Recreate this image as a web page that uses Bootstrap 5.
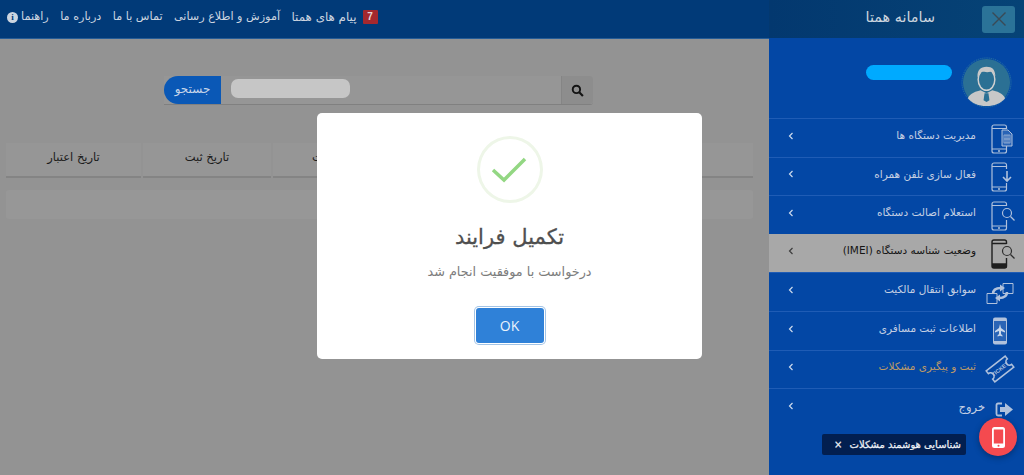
<!DOCTYPE html>
<html lang="fa">
<head>
<meta charset="utf-8">
<title>سامانه همتا</title>
<link href="https://cdn.jsdelivr.net/npm/bootstrap@5.3.0/dist/css/bootstrap.min.css" rel="stylesheet">
<style>
html,body{height:475px;overflow:hidden}
body{font-family:"DejaVu Sans","Noto Sans",sans-serif;background:#f5f5f5;position:relative;font-size:10px}
.shell{height:475px}
.workarea{width:769px;min-width:769px}
.topstrip{height:39px;background:#013a78;border-bottom:1px solid #265c96;color:#ccd5e0;padding:0 7px 3px;gap:11.5px;font-size:11.2px}
.infodot{width:11px;height:11px;border-radius:50%;background:#ccd5e0;color:#013a78;font:bold 9px/11px "Liberation Serif",serif;text-align:center;margin-right:3px}
.msgtext{font-size:11.9px;margin-right:2px}
.msgcount{background:#a5282e;color:#e8d5d6;font:bold 10px/14px "Liberation Sans",sans-serif;width:15px;height:14px;text-align:center;border-radius:1px}
.searchline{width:429px;height:29px;margin:37px 0 0 164px;background:#fbfbfb;border-bottom:1px solid #d6d6d6;border-radius:0 3px 3px 0}
.searchbtn{width:57px;background:#0a58b6;color:#c8d6ea;border-radius:15px 0 0 15px;font-size:12px;position:relative;z-index:1;padding-bottom:2px}
.searchfield{padding:3px 10px}
.blurpill{width:119px;height:19px;border-radius:7px;background:#c6c6c6;position:relative;z-index:1}
.lensbox{width:32px;background:#ececec;border-left:1px solid #dedede;border-radius:0 3px 3px 0}
.headrow{margin:38px 0 0 6px;width:747px;gap:2px;height:35px}
.headcell{background:#fbfbfb;border-bottom:2px solid #dcdcdc;color:#333;font-size:11.5px;padding-bottom:3px}
.cellvalid{width:135px}
.cellreg{width:128px}
.cellstate{width:135px}
.emptyrow{margin:12px 0 0 6px;width:747px;height:29px;background:#fcfcfc;border-radius:3px}
.dimmer{position:absolute;left:0;top:39px;width:769px;height:436px;background:rgba(0,0,0,.4)}
.dialog{position:absolute;left:317px;top:113px;width:385px;height:246px;background:#fff;border-radius:5px;z-index:3}
.okmark{width:66px;height:67px;border:3px solid #eef6e8;border-radius:50%;margin-top:23px}
.dialogtitle{font-size:21px;font-weight:500;color:#4f4f4f;line-height:28px;margin:20px 0 0;-webkit-text-stroke:.3px #4f4f4f}
.dialogtext{font-size:12.8px;color:#7c7c7c;margin:13px 0 0;line-height:16px}
.okbtn{width:68px;height:35px;margin-top:28px;background:#2f81d8;color:#eaf3fc;border:0;border-radius:3px;font:14px "Open Sans",sans-serif;box-shadow:0 0 0 1px #fff,0 0 0 2px #a3c4e6}
.sidepane{width:255px;background:#0347a5}
.sidetop{height:38px;background:linear-gradient(90deg,#03386f,#064376)}
.closebox{width:33px;height:27px;background:#2b7398;border-radius:3px;margin:0 9px 0 0}
.sidetitle{font-size:14.4px;color:#ced6df;margin-right:47px;padding-bottom:2px}
.userblock{height:80px;padding:0 12px 0 0}
.userpill{width:86px;height:15px;border-radius:8px;background:#00aaff;margin:0 9px 11px auto}
.avatar{margin-top:8px}
.menuline{height:38.6px;border-top:1px solid #1f5cb5;color:#c3cfe3;font-size:10.5px;padding-left:19px}
.menuline.current{background:#a8a8a8;color:#151515;border-top:0}
.menuline.amber{color:#bd9a68}
.chev{width:6px;height:8px;margin-bottom:4px;opacity:.8}
.menutext{margin:0 12px 4px auto}
.menutext.exittext{margin:0 3px 1px auto;font-size:11.5px}
.menuicon{width:36px;height:36px;overflow:visible;opacity:.9}
.tipbar{position:absolute;left:822px;top:434px;width:144px;height:21px;background:#021f50;color:#eef1f6;border-radius:2px;z-index:4;font-size:10px;-webkit-text-stroke:.25px #eef1f6;padding:0 5px 1px 12px;white-space:nowrap}
.redfab{position:absolute;left:979px;top:418px;width:38px;height:38px;border-radius:50%;background:#f44a4f;z-index:4;box-shadow:0 2px 6px rgba(0,0,0,.3)}
</style>
</head>
<body>
<div class="shell d-flex">
  <main class="workarea">
    <div class="topstrip d-flex align-items-center" dir="ltr">
      <span class="d-flex align-items-center"><span class="infodot">i</span><span dir="rtl">راهنما</span></span>
      <span dir="rtl">درباره ما</span>
      <span dir="rtl">تماس با ما</span>
      <span dir="rtl">آموزش و اطلاع رسانی</span>
      <span class="d-flex align-items-center gap-1"><span class="msgtext" dir="rtl">پیام های همتا</span><span class="msgcount">7</span></span>
    </div>
    <div class="searchline d-flex">
      <div class="searchbtn d-flex align-items-center justify-content-center">جستجو</div>
      <div class="searchfield flex-grow-1"><div class="blurpill"></div></div>
      <div class="lensbox d-flex align-items-center justify-content-center">
        <svg width="13" height="13" viewBox="0 0 12 12"><circle cx="5" cy="5" r="3.4" fill="none" stroke="#222" stroke-width="1.8"/><path d="M7.600 7.600 11 11" stroke="#222" stroke-width="2"/></svg>
      </div>
    </div>
    <div class="headrow d-flex">
      <div class="headcell cellvalid d-flex align-items-center justify-content-center">تاریخ اعتبار</div>
      <div class="headcell cellreg d-flex align-items-center justify-content-center">تاریخ ثبت</div>
      <div class="headcell cellstate d-flex align-items-center justify-content-center">وضعیت ثبت</div>
      <div class="headcell flex-grow-1"></div>
    </div>
    <div class="emptyrow"></div>
  </main>
  <aside class="sidepane flex-grow-1">
    <div class="sidetop d-flex align-items-center justify-content-end">
      <span class="sidetitle">سامانه همتا</span>
      <span class="closebox d-flex align-items-center justify-content-center">
        <svg width="16" height="16" viewBox="0 0 16 16"><path d="M1.500 1.500 14.500 14.500M14.500 1.500 1.500 14.500" stroke="#3a4a55" stroke-width="1.400"/></svg>
      </span>
    </div>
    <div class="userblock d-flex align-items-center">
      <div class="userpill"></div>
      <svg class="avatar" width="51" height="51" viewBox="0 0 52 52"><circle cx="26" cy="26" r="24" fill="#2b7094"/><circle cx="26" cy="26" r="25" fill="none" stroke="#2f7aa0" stroke-dasharray="1 1"/><path d="M7 42c2-5 9-7 13-8l6 3 6-3c4 1 11 3 13 8-4 5-11 8-19 8S11 47 7 42Z" fill="#c8c8c8"/><path d="M24 37h4l1 7-3 2-3-2Z" fill="#2b7094"/><ellipse cx="26" cy="23" rx="8.500" ry="11" fill="#2b7094" stroke="#d0d0d0" stroke-width="1.500"/><path d="M17 21c-1-7 3-11 9-11 6 0 9 3 9 10-1-3-3-5-5-5-3 1-7 0-9 0-1 2-3 3-4 6Z" fill="#c8c8c8"/></svg>
    </div>
    <div class="menuline d-flex align-items-center"><svg class="chev" viewBox="0 0 6 8"><path d="M4.500 1 1.500 4l3 3" fill="none" stroke="#fff" stroke-width="1.200"/></svg><span class="menutext">مدیریت دستگاه ها</span><svg class="menuicon" viewBox="0 0 36 36"><path d="M18.500 9V7a2 2 0 0 0-2-2H6a2 2 0 0 0-2 2v24a2 2 0 0 0 2 2h10.500a2 2 0 0 0 2-2v-5M4 8.500h14M4 29h14" fill="none" stroke="#c3cfe3" stroke-width="1.200"/><circle cx="11" cy="31" r="1" fill="#c3cfe3"/><path d="M14 10h6l4 4v12H14Z" fill="#2f68b8" stroke="#c3cfe3"/><path d="M16 15h6v8h-6ZM18 15v8M20 15v8M16 19h6" fill="none" stroke="#c3cfe3" stroke-width=".7"/></svg></div>
    <div class="menuline d-flex align-items-center"><svg class="chev" viewBox="0 0 6 8"><path d="M4.500 1 1.500 4l3 3" fill="none" stroke="#fff" stroke-width="1.200"/></svg><span class="menutext">فعال سازی تلفن همراه</span><svg class="menuicon" viewBox="0 0 36 36"><path d="M18.500 11V7a2 2 0 0 0-2-2H6a2 2 0 0 0-2 2v24a2 2 0 0 0 2 2h10.500a2 2 0 0 0 2-2v-6M4 8.500h14.500M4 29h14.500" fill="none" stroke="#c3cfe3" stroke-width="1.200"/><circle cx="11" cy="31" r="1" fill="#c3cfe3"/><path d="M19 13v10M15 19l4 4 4-4" fill="none" stroke="#c3cfe3" stroke-width="1.600"/></svg></div>
    <div class="menuline d-flex align-items-center"><svg class="chev" viewBox="0 0 6 8"><path d="M4.500 1 1.500 4l3 3" fill="none" stroke="#fff" stroke-width="1.200"/></svg><span class="menutext">استعلام اصالت دستگاه</span><svg class="menuicon" viewBox="0 0 36 36"><path d="M18.500 9V7a2 2 0 0 0-2-2H6a2 2 0 0 0-2 2v24a2 2 0 0 0 2 2h10.500a2 2 0 0 0 2-2v-8M4 8.500h14.500M4 29h14.500" fill="none" stroke="#c3cfe3" stroke-width="1.200"/><circle cx="11" cy="31" r="1" fill="#c3cfe3"/><circle cx="19" cy="16" r="4.500" fill="none" stroke="#c3cfe3" stroke-width="1.200"/><path d="m22.500 19.500 4 4" stroke="#c3cfe3" stroke-width="1.300"/></svg></div>
    <div class="menuline current d-flex align-items-center"><svg class="chev" viewBox="0 0 6 8"><path d="M4.500 1 1.500 4l3 3" fill="none" stroke="#222" stroke-width="1.200"/></svg><span class="menutext" dir="rtl">وضعیت شناسه دستگاه (IMEI)</span><svg class="menuicon" viewBox="0 0 36 36"><path d="M18.500 9V7a2 2 0 0 0-2-2H6a2 2 0 0 0-2 2v24a2 2 0 0 0 2 2h10.500a2 2 0 0 0 2-2v-8M4 8.500h14.500M4 29h14.500" fill="none" stroke="#111" stroke-width="1.400"/><path d="M4 29h14.500v4H4Z" fill="#111"/><circle cx="19" cy="16" r="4.500" fill="none" stroke="#222" stroke-width="1.200"/><path d="m22.500 19.500 4 4" stroke="#222" stroke-width="1.300"/></svg></div>
    <div class="menuline d-flex align-items-center"><svg class="chev" viewBox="0 0 6 8"><path d="M4.500 1 1.500 4l3 3" fill="none" stroke="#fff" stroke-width="1.200"/></svg><span class="menutext">سوابق انتقال مالکیت</span><svg class="menuicon" viewBox="0 0 36 36"><path d="M15 9.500h10v10H15ZM-1 19.500h10v10H-1Z" fill="none" stroke="#c3cfe3"/><path d="M5 20c0-4 3-6 8-6" fill="none" stroke="#c3cfe3" stroke-width="2.600"/><path d="M12 10.500l5 3.500-5 3.500Z" fill="#c3cfe3"/><path d="M19 18c0 4-3 6-8 6" fill="none" stroke="#c3cfe3" stroke-width="2.600"/><path d="M12 20.500 7 24l5 3.500Z" fill="#c3cfe3"/></svg></div>
    <div class="menuline d-flex align-items-center"><svg class="chev" viewBox="0 0 6 8"><path d="M4.500 1 1.500 4l3 3" fill="none" stroke="#fff" stroke-width="1.200"/></svg><span class="menutext">اطلاعات ثبت مسافری</span><svg class="menuicon" viewBox="0 0 36 36"><rect x="5" y="4.500" width="14" height="27" rx="2" fill="#c3cfe3"/><rect x="6" y="8" width="12" height="20" fill="#2f68b8"/><path d="M12 11l1 4 4 3v1.500l-4-1.500v3l1.500 1.500v1l-2.500-.8-2.500.8v-1L11 21v-3l-4 1.500V18l4-3Z" fill="#dfe7f3"/></svg></div>
    <div class="menuline amber d-flex align-items-center"><svg class="chev" viewBox="0 0 6 8"><path d="M4.500 1 1.500 4l3 3" fill="none" stroke="#fff" stroke-width="1.200"/></svg><span class="menutext">ثبت و پیگیری مشکلات</span><svg class="menuicon" viewBox="0 0 36 36"><g transform="translate(12 18) rotate(-38)"><path d="M-12-7H12v3.500a3.500 3.500 0 0 0 0 7V7H-12V3.500a3.500 3.500 0 0 0 0-7Z" fill="none" stroke="#c3cfe3" stroke-width="1.600"/><text x="0" y="2" font-size="5.500" font-weight="700" text-anchor="middle" fill="#c3cfe3" font-family="Liberation Sans">TICKET</text></g></svg></div>
    <div class="menuline d-flex align-items-center"><svg class="chev" viewBox="0 0 6 8"><path d="M4.500 1 1.500 4l3 3" fill="none" stroke="#fff" stroke-width="1.200"/></svg><span class="menutext exittext">خروج</span><svg class="menuicon" viewBox="0 0 36 36"><path d="M14 13.500H10A1.500 1.500 0 0 0 8.500 15v9a1.500 1.500 0 0 0 1.500 1.500h4" fill="none" stroke="#c3cfe3" stroke-width="1.800"/><path d="M12 17h5v-4l8 6.500-8 6.500v-4h-5Z" fill="#c3cfe3"/></svg></div>
  </aside>
</div>
<div class="dimmer"></div>
<div class="dialog d-flex flex-column align-items-center" role="dialog">
  <div class="okmark d-flex align-items-center justify-content-center">
    <svg width="40" height="30" viewBox="0 0 40 30"><path d="M3 15 14 25 35 4" fill="none" stroke="#93d783" stroke-width="3.500"/></svg>
  </div>
  <h2 class="dialogtitle">تکمیل فرایند</h2>
  <p class="dialogtext">درخواست با موفقیت انجام شد</p>
  <button type="button" class="okbtn">OK</button>
</div>
<div class="tipbar d-flex align-items-center justify-content-between"><span>×</span><span>شناسایی هوشمند مشکلات</span></div>
<div class="redfab d-flex align-items-center justify-content-center">
  <svg width="13" height="21" viewBox="0 0 13 21"><rect width="13" height="21" rx="2.500" fill="#fff"/><rect x="1.800" y="2.500" width="9.400" height="14" fill="#f44a4f"/><circle cx="6.500" cy="18.700" r="1" fill="#f44a4f"/></svg>
</div>
<script src="https://cdn.jsdelivr.net/npm/bootstrap@5.3.0/dist/js/bootstrap.bundle.min.js"></script>
</body>
</html>
